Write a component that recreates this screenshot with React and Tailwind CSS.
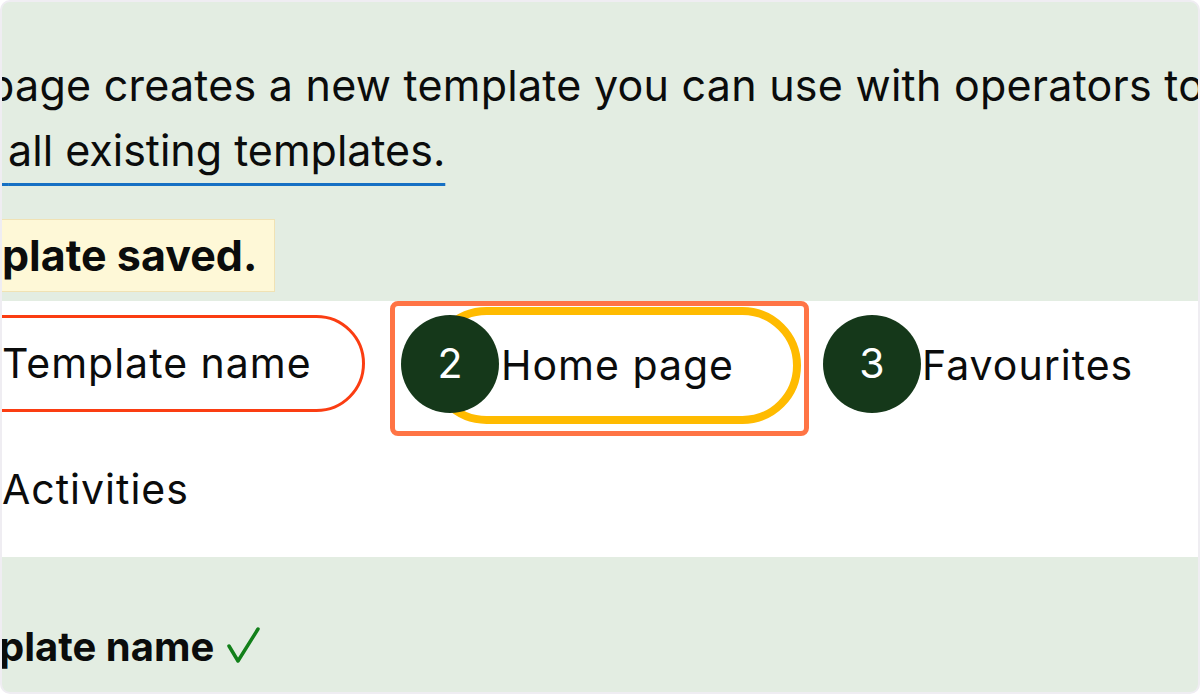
import React from 'react';

const font = { fontFamily: 'Inter, Roboto, sans-serif' };

const Step = ({ n, className }) => (
    <div
        className={`absolute top-[14px] h-[98px] w-[98px] rounded-full bg-[#15381a] flex items-center justify-center text-white text-[41px] ${className}`}
    >
        {n}
    </div>
);

const App = () => {
    return (
        <div className="w-[1200px] h-[694px] bg-white" style={font}>
            <div className="h-full w-full rounded-[10px] bg-[#efedf2] p-[2px]">
                <div className="h-full w-full rounded-[8px] bg-[#e3ede2] overflow-hidden text-[#0b0c0c]">
                    {/* Intro paragraph */}
                    <p className="pt-[51px] text-[43px] tracking-[0.25px] leading-[65px] whitespace-nowrap ml-[-14px]">
                        page creates a new template you can use with operators to
                    </p>
                    <p className="text-[43px] leading-[65px] whitespace-nowrap ml-[-6px]">
                        <span className="underline decoration-[#1670c4] decoration-[3px] underline-offset-[17px]">
                            {'\u00a0'}all existing templates.
                        </span>
                    </p>

                    {/* Saved banner */}
                    <div className="mt-[36px] ml-[-12px] inline-block border border-[#f0e2b4] bg-[#fef8d7] pl-[11px] pr-[17px] text-[43px] font-bold leading-[71px] whitespace-nowrap">
                        plate saved.
                    </div>

                    {/* Tabs */}
                    <div className="relative mt-[9px] bg-white pt-[6px] pb-[36px]">
                        <div className="flex items-center h-[117px] text-[41px] tracking-[1px] whitespace-nowrap">
                            <div className="ml-[-52px] mb-[4px] h-[97px] w-[415px] rounded-full border-[3px] border-[#fb3d12] flex items-center pl-[49px]">
                                Template name
                            </div>
                            <div className="ml-[63px] h-[117px] w-[373px] rounded-full border-[8px] border-[#ffbb00] flex items-center pl-[65px]">
                                Home page
                            </div>
                            <div className="ml-[121px]">Favourites</div>
                        </div>
                        <div className="mt-[35px] text-[41px] tracking-[1px]">Activities</div>

                        {/* Annotation overlays */}
                        <div className="absolute left-[388px] top-0 h-[135px] w-[419px] rounded-[8px] border-[5px] border-[#ff7445]" />
                        <Step n="2" className="left-[399px]" />
                        <Step n="3" className="left-[821px]" />
                    </div>

                    {/* Field label */}
                    <div className="mt-[60px] flex items-center text-[40px] font-bold leading-[60px] whitespace-nowrap ml-[-3px]">
                        <span>plate name</span>
                        <svg width="36" height="38" viewBox="0 0 36 38" className="ml-[12px] mt-[-4px]">
                            <path
                                d="M3 20 L12 35 L32 3"
                                fill="none"
                                stroke="#12801a"
                                strokeWidth="3.5"
                                strokeLinecap="round"
                                strokeLinejoin="round"
                            />
                        </svg>
                    </div>
                </div>
            </div>
        </div>
    );
};

export default App;
